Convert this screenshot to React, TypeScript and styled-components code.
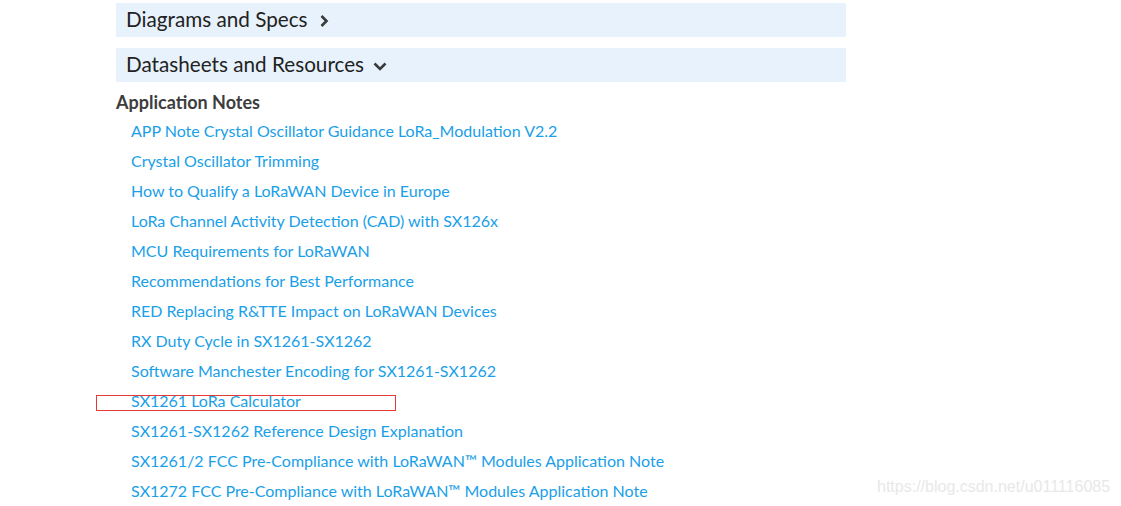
import styled, { createGlobalStyle } from "styled-components";

const GlobalStyle = createGlobalStyle`
  html, body {
    margin: 0;
    padding: 0;
    background: #ffffff;
  }
  body {
    font-family: Lato, "Open Sans", "Noto Sans", sans-serif;
  }
`;

const Page = styled.div`
  position: relative;
  width: 1121px;
  height: 506px;
  overflow: hidden;
  padding: 3px 0 0 116px;
  box-sizing: border-box;
`;

const Column = styled.div`
  width: 730px;
  display: flex;
  flex-direction: column;
`;

const SectionBar = styled.div`
  height: 34px;
  background: #e8f2fc;
  display: flex;
  align-items: center;
  gap: 9px;
  padding: 0 0 2px 10px;
  box-sizing: border-box;
  margin-bottom: 11px;
  font-size: 20.7px;
  color: #222222;
`;

const Chevron = styled.svg`
  width: 14px;
  height: 14px;
  margin-top: 3px;
`;

const Heading = styled.div`
  font-size: 18px;
  font-weight: 700;
  line-height: 24px;
  color: #3d3d3d;
  margin: -3px 0 2px 0;
`;

const LinkList = styled.ul`
  list-style: none;
  margin: 0;
  padding: 0;
`;

const LinkRow = styled.li`
  position: relative;
  height: 30px;
  line-height: 30px;
  padding-left: 15px;
  font-size: 16px;
  color: #1aa0e8;
  white-space: nowrap;
`;

const Highlight = styled.div`
  position: absolute;
  left: -20px;
  top: 9px;
  width: 298px;
  height: 14px;
  border: 1px solid #e53935;
`;

const Watermark = styled.div`
  position: absolute;
  left: 877px;
  top: 478px;
  font-family: "Liberation Sans", Arial, sans-serif;
  font-size: 16px;
  color: #e8e8e8;
`;

const notes = [
  "APP Note Crystal Oscillator Guidance LoRa_Modulation V2.2",
  "Crystal Oscillator Trimming",
  "How to Qualify a LoRaWAN Device in Europe",
  "LoRa Channel Activity Detection (CAD) with SX126x",
  "MCU Requirements for LoRaWAN",
  "Recommendations for Best Performance",
  "RED Replacing R&TTE Impact on LoRaWAN Devices",
  "RX Duty Cycle in SX1261-SX1262",
  "Software Manchester Encoding for SX1261-SX1262",
  "SX1261 LoRa Calculator",
  "SX1261-SX1262 Reference Design Explanation",
  "SX1261/2 FCC Pre-Compliance with LoRaWAN™ Modules Application Note",
  "SX1272 FCC Pre-Compliance with LoRaWAN™ Modules Application Note",
];

export default function App() {
  return (
    <>
      <GlobalStyle />
      <Page>
        <Column>
          <SectionBar>
            Diagrams and Specs
            <Chevron viewBox="0 0 14 14">
              <path d="M4.5 2 L9.5 7 L4.5 12" fill="none" stroke="#3a3a3a" strokeWidth="2.6" />
            </Chevron>
          </SectionBar>
          <SectionBar>
            Datasheets and Resources
            <Chevron viewBox="0 0 14 14">
              <path d="M1.5 4.5 L7 10 L12.5 4.5" fill="none" stroke="#3a3a3a" strokeWidth="2.6" />
            </Chevron>
          </SectionBar>
          <Heading>Application Notes</Heading>
          <LinkList>
            {notes.map((n) => (
              <LinkRow key={n}>
                {n}
                {n === "SX1261 LoRa Calculator" && <Highlight />}
              </LinkRow>
            ))}
          </LinkList>
        </Column>
        <Watermark>https://blog.csdn.net/u011116085</Watermark>
      </Page>
    </>
  );
}
